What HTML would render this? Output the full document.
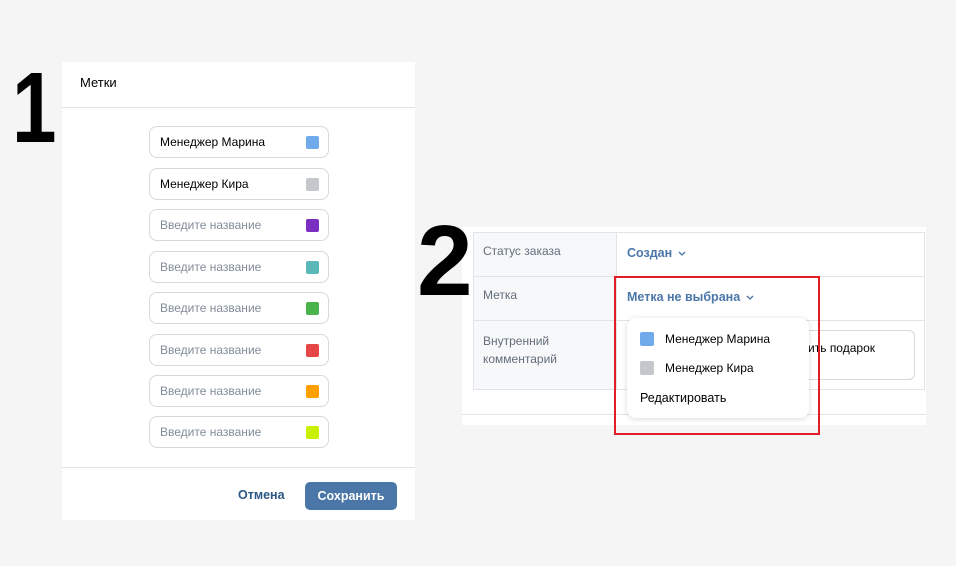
<!DOCTYPE html>
<html><head><meta charset="utf-8"><style>
*{box-sizing:border-box;margin:0;padding:0}
body{width:956px;height:566px;background:#f5f5f5;font-family:"Liberation Sans",sans-serif;position:relative;overflow:hidden;font-size:12px}
.a{position:absolute}
.num{position:absolute;font-weight:bold;color:#000;font-family:"Liberation Sans",sans-serif;z-index:5}
.inp{position:absolute;left:149px;width:180px;height:32px;border:1px solid #d7d8db;border-radius:8px;background:#fff;padding-left:10px;line-height:31px;color:#000}
.inp.p{color:#818c99}
.sw{position:absolute;right:9px;top:9px;width:13px;height:13px;border-radius:2px}
svg.ch{vertical-align:middle;margin-left:6px}
</style></head><body>
<div class="num" style="left:12px;top:58px;font-size:100px;line-height:100px;transform:scaleX(0.8);transform-origin:0 0;z-index:0">1</div>

<div class="a" style="left:62px;top:62px;width:353px;height:458px;background:#fff">
  <div class="a" style="left:18px;top:13px;font-size:13px;color:#000">Метки</div>
  <div class="a" style="left:0;top:45px;width:353px;height:1px;background:#e3e4e8"></div>
  <div class="a" style="left:0;top:405px;width:353px;height:1px;background:#e3e4e8"></div>
  <div class="a" style="left:176px;top:426px;color:#2a5885;font-weight:bold;font-size:12.5px">Отмена</div>
  <div class="a" style="left:243px;top:420px;width:92px;height:28px;background:#4a76a8;border-radius:5px;color:#fff;font-weight:bold;font-size:12.5px;text-align:center;line-height:28px">Сохранить</div>
</div>
<div class="inp" style="top:126px">Менеджер Марина<div class="sw" style="background:#71aaeb"></div></div>
<div class="inp" style="top:168px">Менеджер Кира<div class="sw" style="background:#c4c8cc"></div></div>
<div class="inp p" style="top:209px">Введите название<div class="sw" style="background:#7b2fc0"></div></div>
<div class="inp p" style="top:251px">Введите название<div class="sw" style="background:#5bb8b8"></div></div>
<div class="inp p" style="top:292px">Введите название<div class="sw" style="background:#4bb34b"></div></div>
<div class="inp p" style="top:334px">Введите название<div class="sw" style="background:#e64646"></div></div>
<div class="inp p" style="top:375px">Введите название<div class="sw" style="background:#ffa000"></div></div>
<div class="inp p" style="top:416px">Введите название<div class="sw" style="background:#c8f000"></div></div>

<div class="a" style="left:462px;top:227px;width:464px;height:198px;background:#fff"></div>
<div class="a" style="left:462px;top:414px;width:464px;height:1px;background:#e3e4e8"></div>
<div class="a" style="left:473px;top:232px;width:452px;height:158px;border:1px solid #e3e4e8"></div>
<div class="a" style="left:474px;top:233px;width:143px;height:156px;background:#f7f8fa;border-right:1px solid #e3e4e8"></div>
<div class="a" style="left:474px;top:276px;width:450px;height:1px;background:#e3e4e8"></div>
<div class="a" style="left:474px;top:320px;width:450px;height:1px;background:#e3e4e8"></div>
<div class="a" style="left:483px;top:244px;color:#626d7a">Статус заказа</div>
<div class="a" style="left:483px;top:288px;color:#626d7a">Метка</div>
<div class="a" style="left:483px;top:332px;color:#626d7a;line-height:18px">Внутренний<br>комментарий</div>
<div class="a" style="left:627px;top:246px;color:#4a76a8;font-weight:bold;font-size:12.5px">Создан<svg class="ch" width="8" height="5" viewBox="0 0 8 5"><path d="M1 1l3 3 3-3" fill="none" stroke="#4a76a8" stroke-width="1.3"/></svg></div>
<div class="a" style="left:627px;top:290px;color:#4a76a8;font-weight:bold;font-size:12.5px">Метка не выбрана<svg class="ch" width="8" height="5" viewBox="0 0 8 5"><path d="M1 1l3 3 3-3" fill="none" stroke="#4a76a8" stroke-width="1.3"/></svg></div>
<div class="a" style="left:628px;top:330px;width:287px;height:50px;border:1px solid #d7d8db;border-radius:6px;background:#fff"></div>
<div class="a" style="left:800px;top:341px;color:#000">жить подарок</div>
<div class="a" style="left:627px;top:318px;width:182px;height:100px;background:#fff;border-radius:9px;box-shadow:0 1px 6px rgba(0,0,0,.15)">
  <div class="a" style="left:13px;top:14px;width:14px;height:14px;background:#71aaeb;border-radius:2px"></div>
  <div class="a" style="left:38px;top:14px;color:#000">Менеджер Марина</div>
  <div class="a" style="left:13px;top:43px;width:14px;height:14px;background:#c4c8cc;border-radius:2px"></div>
  <div class="a" style="left:38px;top:43px;color:#000">Менеджер Кира</div>
  <div class="a" style="left:13px;top:73px;color:#000;font-size:12.5px">Редактировать</div>
</div>
<div class="a" style="left:614px;top:276px;width:206px;height:159px;border:2px solid #e21f26"></div>
<div class="num" style="left:417px;top:211px;font-size:100px;line-height:100px">2</div>
</body></html>
